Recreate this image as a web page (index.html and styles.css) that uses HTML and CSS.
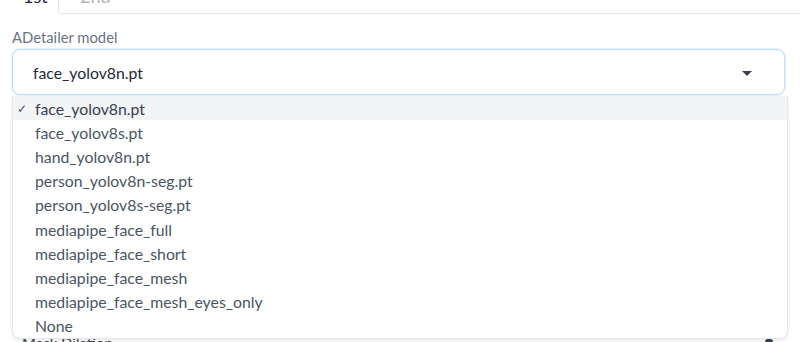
FILE: index.html
```html
<!DOCTYPE html>
<html>
<head>
<meta charset="utf-8">
<link rel="stylesheet" href="styles.css">
</head>
<body>
<div class="page">
  <div class="tabs">
    <button class="tab tab-active">1st</button>
    <button class="tab">2nd</button>
    <div class="tab-fill"></div>
  </div>
  <div class="field">
    <label class="label">ADetailer model</label>
    <div class="select-wrap">
      <div class="select">
        <span class="select-value">face_yolov8n.pt</span>
        <svg class="caret" width="10" height="6" viewBox="0 0 10 6"><path d="M0 0 H10 L5 5 Z" fill="#374151"/></svg>
      </div>
      <ul class="menu">
        <li class="item item-selected"><span class="check">✓</span>face_yolov8n.pt</li>
        <li class="item"><span class="check"></span>face_yolov8s.pt</li>
        <li class="item"><span class="check"></span>hand_yolov8n.pt</li>
        <li class="item"><span class="check"></span>person_yolov8n-seg.pt</li>
        <li class="item"><span class="check"></span>person_yolov8s-seg.pt</li>
        <li class="item"><span class="check"></span>mediapipe_face_full</li>
        <li class="item"><span class="check"></span>mediapipe_face_short</li>
        <li class="item"><span class="check"></span>mediapipe_face_mesh</li>
        <li class="item"><span class="check"></span>mediapipe_face_mesh_eyes_only</li>
        <li class="item"><span class="check"></span>None</li>
      </ul>
    </div>
  </div>
  <div class="next-row">
    <span class="next-label">Mask Dilation</span>
    <span class="next-handle"></span>
  </div>
</div>
</body>
</html>
```
FILE: styles.css
```css
* { box-sizing: border-box; }
html, body { margin: 0; padding: 0; background: #ffffff; }
html { overflow: hidden; }
body {
  font-family: "Lato", "Liberation Sans", sans-serif;
  color: #1f2937;
}
.page {
  display: flex;
  flex-direction: column;
  padding: 0 12px;
  width: 800px;
  height: 342px;
}
.tabs {
  display: flex;
  align-items: flex-end;
  margin-top: -20px;
  height: 34px;
  flex: none;
}
.tab {
  font-family: inherit;
  font-size: 18px;
  background: none;
  border: 1px solid transparent;
  border-bottom: 1px solid #e5e7eb;
  padding: 5px 20px 8px;
  color: #b0b5bd;
  height: 34px;
  line-height: 18px;
  margin: 0;
}
.tab-active {
  color: #1f2937;
  border-color: transparent #e5e7eb transparent transparent;
  border-bottom-color: #ffffff;
  width: 47px;
  padding-left: 10px;
  padding-right: 0;
  text-align: left;
}
.tab-fill {
  flex: 1;
  border-bottom: 1px solid #e5e7eb;
  height: 34px;
  margin-right: -12px;
}
.field {
  padding-top: 15px;
  flex: none;
}
.label {
  display: block;
  font-size: 14.8px;
  line-height: 16px;
  color: #6b7280;
  margin-bottom: 4px;
}
.select-wrap {
  position: relative;
  width: 773px;
}
.select {
  display: flex;
  align-items: center;
  justify-content: space-between;
  height: 46px;
  border: 1px solid #bfdbfe;
  border-radius: 8px;
  padding: 0 32px 0 20px;
  background: #fff;
  box-shadow: 0 0 0 1px rgba(191,219,254,0.35);
}
.select-value {
  font-size: 15.8px;
  color: #1f2937;
}
.caret { display: block; margin-top: 3px; }
.menu {
  position: absolute;
  top: 47px;
  left: 0;
  width: 776px;
  margin: 0;
  padding: 0;
  list-style: none;
  background: #fff;
  border: 1px solid #e5e7eb;
  border-top: none;
  border-radius: 0 0 8px 8px;
  box-shadow: 0 2px 4px rgba(0,0,0,0.08);
  z-index: 2;
}
.item {
  display: flex;
  align-items: center;
  height: 24.2px;
  font-size: 15.8px;
  color: #4b5563;
  padding-left: 4px;
}
.item-selected {
  background: #f3f4f6;
  color: #374151;
}
.check {
  display: inline-block;
  width: 18px;
  font-size: 12px;
  color: #4b5563;
}
.next-row {
  display: flex;
  justify-content: space-between;
  align-items: flex-start;
  padding: 0 16px 0 10px;
  margin-top: 239px;
  flex: none;
}
.next-label {
  font-size: 15px;
  line-height: 18px;
  color: #374151;
}
.next-handle {
  width: 6px;
  height: 6px;
  background: #374151;
  margin-top: 4px;
  transform: rotate(45deg);
}
```
